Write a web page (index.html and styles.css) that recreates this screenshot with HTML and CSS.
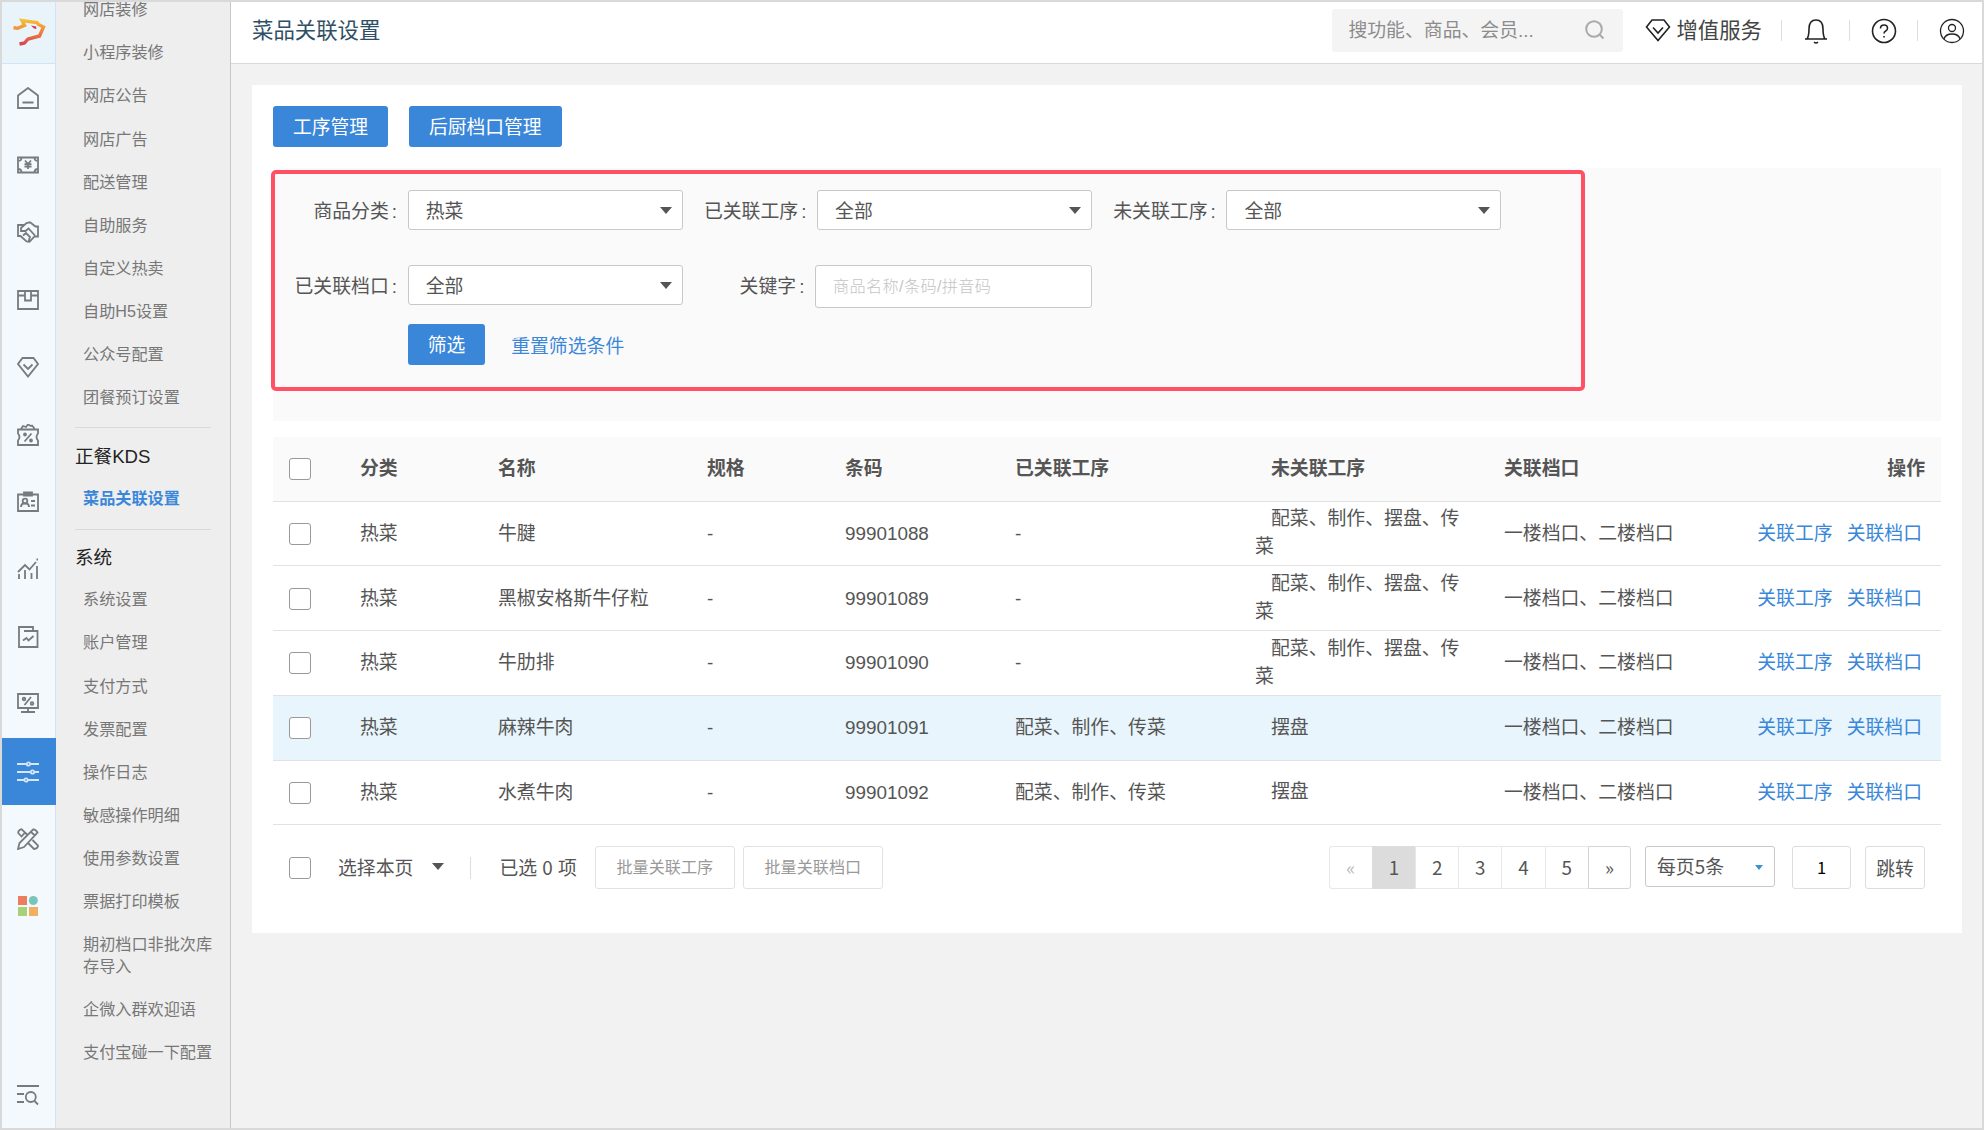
FILE: index.html
```html
<!DOCTYPE html>
<html lang="zh-CN">
<head>
    <meta charset="UTF-8">
    <meta name="viewport" content="width=device-width, initial-scale=1.0">
    <title>菜品关联设置</title>
    <link rel="stylesheet" href="styles.css">
</head>
<body>

<div class="app">
    <!-- 一级导航 -->
    <nav class="rail">
        <a class="logo" href="#">
            <svg width="34" height="30" viewBox="0 0 34 30" fill="none">
                <defs>
                    <linearGradient id="lg" x1="0" y1="0" x2="0" y2="1">
                        <stop offset="0" stop-color="#f6bd35"/>
                        <stop offset="0.5" stop-color="#ee8040"/>
                        <stop offset="1" stop-color="#dc4350"/>
                    </linearGradient>
                </defs>
                <path d="M1.5 9.5l4 .8 7-3L10 2.5l15 2 1.5 2 5 2.5-4 9-11.500 3-3.500 4-5 1" stroke="url(#lg)" stroke-width="3.4"/>
                <path d="M19 7.500l5 1 .5 2.500-2.500-.5z" fill="#e0305a"/>
            </svg>
        </a>
        <a class="rail-item" href="#">
            <svg class="ico" viewBox="0 0 22 22"><path d="M1 8.500L11 1l10 7.500V21H1zM5.500 15.500h11"/></svg>
        </a>
        <a class="rail-item" href="#">
            <svg class="ico" viewBox="0 0 22 22"><path d="M1 3.500h20v15H1zM1 7q3.500 0 3.500-3.500M21 7q-3.500 0-3.500-3.500M1 15q3.500 0 3.500 3.500M21 15q-3.500 0-3.500 3.500M8 6.500l3 3.500 3-3.500M11 10v5M7.500 10.200h7M7.500 12.500h7"/></svg>
        </a>
        <a class="rail-item" href="#">
            <svg class="ico" viewBox="0 0 22 22"><path d="M4 4H1v11h2.500l6 5.500 3 .3 5-5.300H21V5.500h-2.500L13 1.300 9.500 2 4 7v3h4.500l3-2.500 6.500 7M4 4h3M6 14.500l3-2.500 4 4-1.500 4.500"/></svg>
        </a>
        <a class="rail-item" href="#">
            <svg class="ico" viewBox="0 0 22 22"><path d="M1 2h20v18H1zM1 6.500h7M14 6.500h7M8 2v9.500h6V2"/></svg>
        </a>
        <a class="rail-item" href="#">
            <svg class="ico" viewBox="0 0 22 22"><path d="M5.500 2h11L21 8 11 20.500 1 8zM6.500 8.500l4.500 4.500 4.500-4.500"/></svg>
        </a>
        <a class="rail-item" href="#">
            <svg class="ico" viewBox="0 0 22 22"><path d="M1 5.500h20v4q-3 3.500 0 7V21H1v-4.500q3-3.500 0-7zM4 5l2-3 3 1 2-2.500 3 1.500 1-.5 2.500 3M14.500 9.500l-7 8"/><circle cx="8" cy="10.500" r="1"/><circle cx="14" cy="16.500" r="1"/></svg>
        </a>
        <a class="rail-item" href="#">
            <svg class="ico" viewBox="0 0 22 22"><path d="M1 3.500h20V20H1zM7 1.500h8v3H7zM4 16q0-3 2.500-3.500h3Q12 13 12 16M14 10h4M14 14.500h4"/><circle cx="8" cy="10" r="2.300"/></svg>
        </a>
        <a class="rail-item" href="#">
            <svg class="ico" viewBox="0 0 22 22"><path d="M1 14l7-7 4.500 4.500L19 4M2 21v-5M8 21v-9M14.500 21v-6M20 21V8"/><path d="M19.500 1.500h1.500"/></svg>
        </a>
        <a class="rail-item" href="#">
            <svg class="ico" viewBox="0 0 22 22"><path d="M2 1h14v4h4.500v16H2zM7 5h9M6 14.500l3.500-2.500 2 2.500 5-4.500"/></svg>
        </a>
        <a class="rail-item" href="#">
            <svg class="ico" viewBox="0 0 22 22"><path d="M1 1h20v14H1zM11 15v4M4 19h14M14 4l-6.500 8"/><circle cx="7" cy="6" r="1.300"/><circle cx="15" cy="10.500" r="1.300"/></svg>
        </a>
        <a class="rail-item active" href="#">
            <svg class="ico" viewBox="0 0 22 22"><path d="M0 3h9.500M13.500 3H22M0 11h13.500M17.500 11H22M0 19h7M11 19h11"/><circle cx="11.500" cy="3" r="1.700"/><circle cx="15.500" cy="11" r="1.700"/><circle cx="9" cy="19" r="1.700"/></svg>
        </a>
        <a class="rail-item" href="#">
            <svg class="ico" viewBox="0 0 22 22"><path d="M1 21l1.500-6L16 1.500q2.500-.5 4.500 3L7 19zM4.500 1.200L8 4.500l-3.500 4L1.200 5q0-3 3.300-3.800zM10 6.500L8 4.500M15.500 12l5.500 5.500q0 3-4 3.500L11.500 15.500M14 4l4.500 4"/></svg>
        </a>
        <a class="rail-item" href="#">
            <svg width="20" height="20" viewBox="0 0 20 20"><path d="M0 0h9v9H0z" fill="#ec7d5f"/><circle cx="15.300" cy="4.500" r="4.500" fill="#7ac5ba"/><path d="M0 11h9v9H0z" fill="#a7d078"/><path d="M11 11h9v9h-9z" fill="#f0b062"/></svg>
        </a>
        <a class="rail-item rail-bottom" href="#">
            <svg class="ico" viewBox="0 0 22 22"><path d="M0 2h22M0 10h7M0 18h7M17.500 17l3.500 3.500"/><circle cx="13.800" cy="13" r="5"/></svg>
        </a>
    </nav>

    <!-- 二级菜单 -->
    <aside class="submenu">
        <a href="#">网店装修</a>
        <a href="#">小程序装修</a>
        <a href="#">网店公告</a>
        <a href="#">网店广告</a>
        <a href="#">配送管理</a>
        <a href="#">自助服务</a>
        <a href="#">自定义热卖</a>
        <a href="#">自助H5设置</a>
        <a href="#">公众号配置</a>
        <a href="#">团餐预订设置</a>
        <h4>正餐KDS</h4>
        <a class="current" href="#">菜品关联设置</a>
        <h4>系统</h4>
        <a href="#">系统设置</a>
        <a href="#">账户管理</a>
        <a href="#">支付方式</a>
        <a href="#">发票配置</a>
        <a href="#">操作日志</a>
        <a href="#">敏感操作明细</a>
        <a href="#">使用参数设置</a>
        <a href="#">票据打印模板</a>
        <a href="#">期初档口非批次库存导入</a>
        <a href="#">企微入群欢迎语</a>
        <a href="#">支付宝碰一下配置</a>
    </aside>

    <div class="main">
        <header class="topbar">
            <h1>菜品关联设置</h1>
            <div class="search">
                <span>搜功能、商品、会员...</span>
                <svg width="20" height="20" viewBox="0 0 20 20"><circle cx="9" cy="9" r="7.800"/><path d="M14.500 14.500l4 4"/></svg>
            </div>
            <a class="vas" href="#">
                <svg width="26" height="24" viewBox="0 0 26 24"><path d="M7 2h12l5.500 7L13 22.500 1.500 9zM8 9.500l5 5.500 5-5.500"/></svg>
                <span>增值服务</span>
            </a>
            <i class="sep"></i>
            <a class="top-ico" href="#"><svg width="26" height="28" viewBox="0 0 26 28"><path d="M2 22h22M4 22q2-3 2-10 0-9 7-9t7 9q0 7 2 10M11 25q2 2 4 0"/></svg></a>
            <i class="sep"></i>
            <a class="top-ico" href="#"><svg width="26" height="28" viewBox="0 0 26 28"><circle cx="13" cy="14" r="11.500"/><path d="M9.500 11.500q0-3.500 3.500-3.500t3.500 3.200q0 1.800-1.800 2.800Q13 15 13 16.500M13 19v1.500"/></svg></a>
            <i class="sep"></i>
            <a class="top-ico" href="#"><svg class="thin" width="26" height="28" viewBox="0 0 26 28"><circle cx="13" cy="14" r="11.500"/><circle cx="13" cy="11" r="3.500"/><path d="M5 22q1.500-5 8-5t8 5"/></svg></a>
        </header>

        <section class="panel">
            <div class="actions">
                <button class="btn">工序管理</button>
                <button class="btn">后厨档口管理</button>
            </div>

            <div class="filter">
                <label>商品分类<i>:</i></label>
                <div class="select">热菜</div>
                <label>已关联工序<i>:</i></label>
                <div class="select">全部</div>
                <label>未关联工序<i>:</i></label>
                <div class="select">全部</div>
                <label>已关联档口<i>:</i></label>
                <div class="select">全部</div>
                <label class="kw-label">关键字<i>:</i></label>
                <input class="keyword" type="text" placeholder="商品名称/条码/拼音码">
                <div class="filter-btns">
                    <button class="btn">筛选</button>
                    <a href="#">重置筛选条件</a>
                </div>
                <div class="mark"></div>
            </div>

            <table class="list">
                <colgroup>
                    <col class="c-check"><col class="c-cate"><col class="c-name"><col class="c-spec"><col class="c-code"><col class="c-linked"><col class="c-unlinked"><col class="c-stall"><col>
                </colgroup>
                <thead>
                    <tr><th><input type="checkbox"></th><th>分类</th><th>名称</th><th>规格</th><th>条码</th><th>已关联工序</th><th>未关联工序</th><th>关联档口</th><th class="ops">操作</th></tr>
                </thead>
                <tbody>
                    <tr><td><input type="checkbox"></td><td>热菜</td><td>牛腱</td><td>-</td><td class="num">99901088</td><td>-</td><td><span>配菜、制作、摆盘、传菜</span></td><td>一楼档口、二楼档口</td><td class="ops"><a href="#">关联工序</a><a href="#">关联档口</a></td></tr>
                    <tr><td><input type="checkbox"></td><td>热菜</td><td>黑椒安格斯牛仔粒</td><td>-</td><td class="num">99901089</td><td>-</td><td><span>配菜、制作、摆盘、传菜</span></td><td>一楼档口、二楼档口</td><td class="ops"><a href="#">关联工序</a><a href="#">关联档口</a></td></tr>
                    <tr><td><input type="checkbox"></td><td>热菜</td><td>牛肋排</td><td>-</td><td class="num">99901090</td><td>-</td><td><span>配菜、制作、摆盘、传菜</span></td><td>一楼档口、二楼档口</td><td class="ops"><a href="#">关联工序</a><a href="#">关联档口</a></td></tr>
                    <tr class="hover"><td><input type="checkbox"></td><td>热菜</td><td>麻辣牛肉</td><td>-</td><td class="num">99901091</td><td>配菜、制作、传菜</td><td><span>摆盘</span></td><td>一楼档口、二楼档口</td><td class="ops"><a href="#">关联工序</a><a href="#">关联档口</a></td></tr>
                    <tr><td><input type="checkbox"></td><td>热菜</td><td>水煮牛肉</td><td>-</td><td class="num">99901092</td><td>配菜、制作、传菜</td><td><span>摆盘</span></td><td>一楼档口、二楼档口</td><td class="ops"><a href="#">关联工序</a><a href="#">关联档口</a></td></tr>
                </tbody>
            </table>

            <div class="footer">
                <input type="checkbox">
                <span class="pick">选择本页</span>
                <span class="count">已选 0 项</span>
                <button class="batch">批量关联工序</button>
                <button class="batch">批量关联档口</button>
                <div class="pager">
                    <a class="off">«</a><a class="on">1</a><a>2</a><a>3</a><a>4</a><a>5</a><a class="next">»</a>
                </div>
                <div class="page-size">每页5条</div>
                <input class="page-no" type="text" value="1">
                <button class="jump">跳转</button>
            </div>
        </section>
    </div>
</div>

</body>
</html>
```

FILE: styles.css
```css
* {
    box-sizing: border-box;
}
body {
    margin: 0;
    font-family: "Liberation Sans", "Noto Sans CJK SC", sans-serif;
    font-size: 18.85px;
    color: #555;
}
a {
    color: #3a87d9;
    text-decoration: none;
}
button, input {
    font-family: inherit;
    padding: 0;
}
svg {
    display: block;
    fill: none;
}
.app {
    display: flex;
    width: 1984px;
    height: 1130px;
    border: 2px solid #d9d9d9;
    overflow: hidden;
}

/* 一级导航 */
.rail {
    display: flex;
    flex-direction: column;
    width: 54px;
    background: #f4f9fe;
    border-right: 1px solid #cfe4f6;
}
.logo {
    display: flex;
    align-items: center;
    justify-content: center;
    height: 62px;
    flex-shrink: 0;
    background: #e8f3fa;
    border-bottom: 1px solid #cfe4f6;
}
.rail-item {
    display: flex;
    align-items: center;
    justify-content: center;
    height: 67.4px;
    flex-shrink: 0;
    padding-right: 1px;
}
.rail-item.active {
    margin-right: -1px;
    padding-right: 2px;
    background: #3a87d9;
}
.rail-bottom {
    margin-top: auto;
    padding-top: 2px;
}
.ico {
    width: 22px;
    height: 22px;
    stroke: #767b80;
    stroke-width: 1.8;
}
.active .ico {
    stroke: #d3e6fa;
}

/* 二级菜单 */
.submenu {
    width: 175px;
    padding: 0 19px;
    background: #eee;
    border-right: 1px solid #c8c8c8;
}
.submenu a {
    display: block;
    margin-right: -2px;
    padding: 10.8px 0 10.8px 8px;
    font-size: 16.15px;
    line-height: 21.5px;
    color: #777;
}
.submenu a:first-child {
    margin-top: -13.5px;
}
.submenu h4 {
    margin: 8px 0 0;
    padding: 16.5px 0 8.5px;
    border-top: 1px solid #d9d9d9;
    font-size: 18.6px;
    font-weight: normal;
    line-height: 24px;
    color: #222;
}
.submenu a.current {
    color: #3a87d9;
    font-weight: bold;
}

/* 顶栏 */
.main {
    flex: 1;
    min-width: 0;
    background: #f2f2f2;
}
.topbar {
    display: flex;
    align-items: center;
    height: 62px;
    padding: 0 17px 5px 21px;
    background: #fff;
    border-bottom: 1px solid #d9d9d9;
}
.topbar h1 {
    margin: 0 auto 4px 0;
    font-size: 21.4px;
    font-weight: normal;
    color: #2f4f66;
}
.topbar svg {
    stroke: #222;
    stroke-width: 1.6;
}
.topbar svg.thin {
    stroke-width: 1.3;
}
.search {
    display: flex;
    align-items: center;
    justify-content: space-between;
    width: 291px;
    height: 43px;
    padding: 0 18px 0 16px;
    background: #f4f4f4;
    border-radius: 3px;
    color: #8c8c8c;
}
.search span {
    margin-bottom: 3px;
}
.topbar .search svg {
    stroke: #aaa;
    stroke-width: 2;
}
.vas {
    display: flex;
    align-items: center;
    gap: 5px;
    margin: 0 19px 0 22px;
    font-size: 21.4px;
    color: #444;
}
.vas span {
    margin-bottom: 3px;
}
.sep {
    width: 1px;
    height: 21px;
    background: #ddd;
}
.top-ico {
    margin: 2px 20px 0 21px;
}
.top-ico:last-child {
    margin-right: 0;
}

/* 内容 */
.panel {
    width: 1710px;
    height: 848px;
    margin: 21px 0 0 21px;
    padding: 21px 21px 0;
    background: #fff;
}
.actions {
    display: flex;
    gap: 21px;
}
.btn {
    height: 41px;
    padding: 0 20px 2px;
    border: none;
    border-radius: 3px;
    background: #3a87d9;
    color: #fff;
    font-size: 18.75px;
}
.filter {
    position: relative;
    display: grid;
    grid-template-columns: 124px 275px 113px 275px 113px 275px;
    grid-template-rows: 75px 59px 41px;
    column-gap: 10.7px;
    align-content: start;
    height: 253px;
    margin-top: 21px;
    padding-top: 22px;
    background: #fafafa;
}
.filter > label {
    line-height: 43px;
    text-align: right;
    white-space: nowrap;
}
.filter label i {
    margin-left: 3px;
    font-style: normal;
}
.select {
    position: relative;
    height: 40px;
    padding-left: 17px;
    border: 1px solid #c8c8c8;
    border-radius: 3px;
    background: #fff;
    line-height: 41px;
}
.select::after, .pick::after {
    content: "";
    border: 6px solid transparent;
    border-top: 7px solid #555;
    border-bottom: 0;
}
.select::after {
    position: absolute;
    right: 10px;
    top: 16px;
}
.kw-label {
    margin-right: 2px;
}
.keyword {
    height: 43px;
    margin-left: -2px;
    padding: 0 17px;
    border: 1px solid #c8c8c8;
    border-radius: 3px;
    font-size: 16.1px;
}
.keyword::placeholder {
    color: #c4c4c4;
    font-weight: 300;
    letter-spacing: 0.4px;
}
.filter-btns {
    grid-column: 2 / 5;
    display: flex;
    gap: 26px;
}
.filter-btns a {
    line-height: 46px;
}
/* 红色标注框 */
.mark {
    position: absolute;
    left: -2px;
    top: 2px;
    width: 1314px;
    height: 221px;
    border: 4px solid #ff5064;
    border-radius: 5px;
    pointer-events: none;
}

/* 列表 */
.list {
    width: 100%;
    margin-top: 16px;
    table-layout: fixed;
    border-collapse: collapse;
    line-height: 28px;
}
.c-check { width: 71px; }
.c-cate { width: 138px; }
.c-name { width: 209px; }
.c-spec { width: 138px; }
.c-code { width: 170px; }
.c-linked { width: 256px; }
.c-unlinked { width: 233px; }
.c-stall { width: 220px; }
.list th {
    height: 64px;
    background: #fafafa;
    text-align: left;
}
.list td {
    height: 64.75px;
}
.list th, .list td {
    padding: 1px 0 0 16px;
    border-bottom: 1px solid #e2e2e2;
}
.list td:nth-child(7) {
    padding: 0 16px 0 0;
}
.list td:nth-child(7) span {
    padding-left: 16px;
}
.list .ops {
    padding-right: 19px;
    text-align: right;
    white-space: nowrap;
}
.list th.ops {
    padding-right: 16px;
}
.ops a + a {
    margin-left: 14px;
}
.hover {
    background: #e8f5fc;
}
input[type="checkbox"] {
    appearance: none;
    display: block;
    width: 22px;
    height: 22px;
    margin: 0;
    border: 1.5px solid #999;
    border-radius: 3px;
    background: #fff;
}

/* 底部 */
.footer {
    display: flex;
    align-items: center;
    height: 43px;
    margin-top: 21px;
    padding: 0 16px;
    font-family: "Noto Sans CJK SC", sans-serif;
}
.pick {
    display: flex;
    align-items: center;
    gap: 19px;
    height: 22px;
    margin-left: 27px;
    padding: 0 26px 2px 0;
    border-right: 1px solid #ddd;
}
.count {
    margin: 0 18px 2px 28px;
    word-spacing: 1px;
}
.batch, .jump {
    height: 43px;
    border: 1px solid #e2e2e2;
    border-radius: 3px;
    background: #fff;
}
.batch {
    width: 140px;
    margin-right: 8px;
    padding-bottom: 3px;
    font-size: 16.1px;
    color: #999;
}
.pager {
    display: flex;
    margin-left: auto;
}
.pager a {
    width: 43.2px;
    height: 43px;
    border: 1px solid #e8e8e8;
    border-right: 0;
    line-height: 39px;
    text-align: center;
    color: #555;
}
.pager a.off {
    border-radius: 3px 0 0 3px;
    color: #bbb;
}
.pager a.on {
    background: #dcdcdc;
    border-color: #dcdcdc;
}
.pager a.next {
    border: 1px solid #d5d5d5;
    border-radius: 0 3px 3px 0;
}
.page-size {
    display: flex;
    align-items: center;
    justify-content: space-between;
    width: 130px;
    height: 41px;
    margin: 0 17px 2px 14px;
    padding: 0 11px 2px;
    border: 1px solid #c8c8c8;
    border-radius: 3px;
}
.page-size::after {
    content: "";
    margin-top: 3px;
    border: 4px solid transparent;
    border-top: 5px solid #3a94d0;
    border-bottom: 0;
}
.page-no {
    width: 59px;
    height: 43px;
    margin-right: 14px;
    padding-bottom: 2px;
    border: 1px solid #ddd;
    border-radius: 3px;
    font-size: 16.5px;
    text-align: center;
}
.jump {
    width: 60px;
    border-color: #ddd;
    font-size: 18.75px;
    color: #555;
}
```
